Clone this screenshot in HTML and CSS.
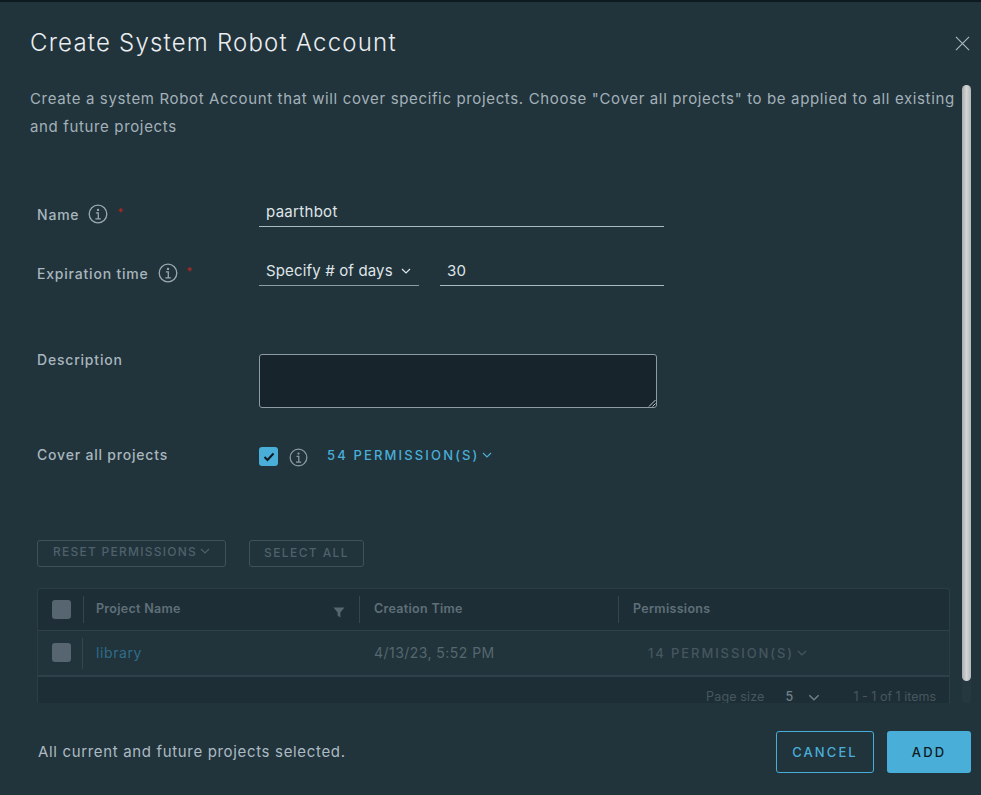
FILE: index.html
```html
<!DOCTYPE html>
<html lang="en">
<head>
  <meta charset="UTF-8">
  <meta name="viewport" content="width=device-width, initial-scale=1">
  <title>Create System Robot Account</title>
  <link rel="stylesheet" href="styles.css">
</head>
<body>
  <div class="modal">
    <header class="modal-head">
      <h1>Create System Robot Account</h1>
      <svg class="close" viewBox="0 0 16 16"><path d="M1 1l14 14M15 1L1 15"/></svg>
    </header>

    <div class="modal-body">
      <p class="intro">Create a system Robot Account that will cover specific projects. Choose "Cover all projects" to be applied to all existing and future projects</p>

      <div class="row row-name">
        <label>Name <svg class="info" viewBox="0 0 20 20"><circle cx="10" cy="10" r="8.8"/><circle class="dot" cx="10" cy="5.9" r="1.2"/><path d="M7.9 8.8h2.4v6M7.4 14.9h5.4"/></svg> <span class="req">*</span></label>
        <div class="field field-wide">paarthbot</div>
      </div>

      <div class="row row-exp">
        <label>Expiration time <svg class="info" viewBox="0 0 20 20"><circle cx="10" cy="10" r="8.8"/><circle class="dot" cx="10" cy="5.9" r="1.2"/><path d="M7.9 8.8h2.4v6M7.4 14.9h5.4"/></svg> <span class="req">*</span></label>
        <div class="field field-select">Specify # of days <svg class="chev" viewBox="0 0 10 6"><path d="M1 1l4 4 4-4"/></svg></div>
        <div class="field field-days">30</div>
      </div>

      <div class="row row-desc">
        <label>Description</label>
        <div class="textarea">
          <svg class="grip" viewBox="0 0 8 8"><path d="M7.5 1L1 7.5M7.5 4.5L4.5 7.5"/></svg>
        </div>
      </div>

      <div class="row row-cover">
        <label>Cover all projects</label>
        <span class="checkbox"><svg viewBox="0 0 12 10"><path d="M1.5 5l3 3 6-6.5"/></svg></span>
        <svg class="info info-cover" viewBox="0 0 20 20"><circle cx="10" cy="10" r="8.8"/><circle class="dot" cx="10" cy="5.9" r="1.2"/><path d="M7.9 8.8h2.4v6M7.4 14.9h5.4"/></svg>
        <a class="perm-link">54 PERMISSION(S) <svg class="chev" viewBox="0 0 10 6"><path d="M1 1l4 4 4-4"/></svg></a>
      </div>

      <div class="actions">
        <button class="btn-off btn-reset">RESET PERMISSIONS <svg class="chev" viewBox="0 0 10 6"><path d="M1 1l4 4 4-4"/></svg></button>
        <button class="btn-off btn-select">SELECT ALL</button>
      </div>

      <div class="grid">
        <div class="grid-head">
          <div class="cell cell-check"><span class="box"></span></div>
          <div class="cell cell-name">Project Name
            <svg class="filter" viewBox="0 0 12 12"><path d="M0.5 1.5h11L7.4 6.4V11.5L4.6 9.8V6.4z"/></svg>
          </div>
          <div class="cell">Creation Time</div>
          <div class="cell">Permissions</div>
        </div>
        <div class="grid-row">
          <div class="cell cell-check"><span class="box"></span></div>
          <div class="cell cell-link">library</div>
          <div class="cell cell-date">4/13/23, 5:52 PM</div>
          <div class="cell cell-perm">14 PERMISSION(S) <svg class="chev" viewBox="0 0 10 6"><path d="M1 1l4 4 4-4"/></svg></div>
        </div>
        <div class="grid-foot">
          <span>Page size</span>
          <span class="size">5 <svg class="chev" viewBox="0 0 10 6"><path d="M1 1l4 4 4-4"/></svg></span>
          <span class="count">1 - 1 of 1 items</span>
        </div>
      </div>

      <div class="scrollbar"><div class="thumb"></div></div>
    </div>

    <footer class="modal-foot">
      <span class="status">All current and future projects selected.</span>
      <button class="btn btn-outline">CANCEL</button>
      <button class="btn btn-primary">ADD</button>
    </footer>
  </div>
</body>
</html>
```

FILE: styles.css
```css
* { margin:0; padding:0; box-sizing:border-box; }
body { font-family:Inter,"Liberation Sans",sans-serif; background:#21333b; color:#acbac3; }
button { font-family:inherit; }
svg { fill:none; stroke:currentColor; }

.modal { height:795px; display:flex; flex-direction:column; background:#21333b; border-top:2px solid #0d1a20; overflow:hidden; }

.modal-head { height:82px; flex:none; display:flex; align-items:center; justify-content:space-between; padding:0 11px 0 30px; }
.modal-head h1 { font-size:24px; font-weight:300; color:#eaedf0; letter-spacing:1.2px; margin-bottom:2px; }
.close { width:15px; height:15px; color:#acbac3; stroke-width:1.2; margin-top:1px; }

.modal-body { position:relative; height:619px; flex:none; overflow:hidden; padding-left:30px; }
.intro { width:930px; padding-top:1px; font-size:15px; line-height:28px; letter-spacing:.645px; color:#a3b1b9; }

.row { display:flex; padding-left:7px; }
.row label { width:222px; flex:none; font-size:14px; font-weight:500; letter-spacing:.8px; color:#a8b6be; display:flex; align-items:center; }
.row-name { margin-top:54px; height:32px; }
.row-name label, .row-exp label { padding-top:6px; }
.row-exp { margin-top:27px; height:32px; }
.row-desc { margin-top:68px; height:54px; }
.row-desc label { align-items:flex-start; margin-top:-3px; }
.row-cover { margin-top:39px; height:19px; align-items:center; }
.row-cover label { margin-bottom:5px; }

.info { width:20px; height:20px; color:#9aa9b2; stroke-width:1.3; margin-left:9px; }
.info .dot { fill:currentColor; stroke:none; }
.req { color:#b5281a; font-size:11px; margin-left:9px; margin-bottom:5px; }

.field { border-bottom:1px solid #acbac3; font-size:15px; letter-spacing:.3px; color:#dfe5e8; padding:6px 0 5px 7px; display:flex; align-items:center; }
.field-wide { width:405px; }
.field-select { width:160px; gap:8px; padding-top:7px; letter-spacing:.15px; border-bottom-color:#8d9ca5; }
.field-days { width:224px; margin-left:21px; padding-top:7px; }
.chev { width:10px; height:6px; stroke-width:1.2; }

.textarea { position:relative; width:398px; height:54px; background:#17242b; border:1px solid #8c9ba4; border-radius:3px; }
.grip { position:absolute; right:0; bottom:0; width:8px; height:8px; color:#c6cdd2; stroke-width:1; }

.checkbox { width:19px; height:19px; background:#49afd9; border-radius:3px; display:flex; align-items:center; justify-content:center; color:#10191e; }
.checkbox svg { width:12px; height:10px; stroke-width:2; }
.info-cover { width:19px; height:19px; margin-left:11px; margin-top:2px; color:#8d9ca5; }
.perm-link { margin-left:19px; margin-bottom:3px; font-size:13px; font-weight:500; letter-spacing:2.15px; color:#49afd9; display:flex; align-items:center; gap:2px; }

.actions { margin:74px 0 0 7px; display:flex; gap:23px; }
.btn-off { height:27px; background:none; border:1px solid #3f525c; border-radius:3px; color:#4f616b; font-size:12px; font-weight:500; letter-spacing:1.2px; display:flex; align-items:center; justify-content:center; }
.btn-reset { width:189px; gap:3px; padding-bottom:5px; letter-spacing:1.25px; }
.btn-select { width:115px; padding-bottom:2px; letter-spacing:1.4px; }

.grid { margin:21px 0 0 7px; width:913px; background:#1e2e36; border:1px solid #2b3e47; border-bottom:none; border-radius:3px 3px 0 0; font-size:14px; color:#56676f; }
.cell { display:flex; align-items:center; padding-left:14px; position:relative; }
.grid-head .cell + .cell::before, .grid-row .cell-check + .cell::before { content:""; position:absolute; left:0; top:7px; bottom:5px; width:1px; background:#34464f; }
.grid-row .cell-check + .cell::before { left:-1px; }
.grid-head, .grid-row { display:grid; grid-template-columns:45px 276px 259px 1fr; }
.grid-head { height:42px; font-size:12.5px; font-weight:600; letter-spacing:.3px; color:#5f7079; border-bottom:1px solid #2e414a; padding-bottom:2px; }
.grid-head .cell:nth-child(n+3) { padding-left:15px; }
.grid-head .cell-name, .grid-row .cell-link { padding-left:13px; }
.grid-row { height:46px; padding-bottom:1px; background:#21333b; border-bottom:2px solid #2e414a; }
.cell-name { justify-content:space-between; padding-right:14px; }
.box { width:19px; height:19px; background:#56656f; border-radius:3px; }
.grid-head .box { margin-top:2px; }
.filter { width:12px; height:12px; fill:#56676f; stroke:none; margin-top:7px; }
.cell-link { color:#2f6d8a; letter-spacing:.6px; }
.cell-date { padding-left:15px; letter-spacing:.45px; }
.cell-perm { padding-left:30px; font-size:13px; font-weight:500; letter-spacing:1.9px; color:#46575f; gap:3px; }
.grid-foot { height:26px; display:flex; justify-content:flex-end; align-items:flex-start; padding:14px 13px 0 0; font-size:12.5px; line-height:12px; letter-spacing:.15px; color:#46575f; }
.size { color:#6f8089; margin-left:21px; font-weight:500; display:flex; align-items:center; gap:15px; }
.size .chev { width:12px; height:7px; }
.count { margin-left:33px; letter-spacing:0; }

.scrollbar { position:absolute; top:1px; right:10px; width:9px; height:100%; background:#26383f; border-radius:5px; }
.thumb { height:596px; background:linear-gradient(90deg,#a9acae,#d3d4d5 50%,#b4b6b8); border-radius:5px; }

.modal-foot { flex:1; display:flex; align-items:center; padding:0 10px 0 38px; }
.status { flex:1; font-size:15px; letter-spacing:.66px; color:#acbac3; margin-top:4px; }
.btn { height:42px; border-radius:3px; font-size:13px; font-weight:500; letter-spacing:2.1px; margin-top:6px; }
.btn-outline { width:98px; background:none; border:1px solid #49afd9; color:#49afd9; margin-right:13px; }
.btn-primary { width:84px; background:#49afd9; border:none; color:#0d1a20; }
```
